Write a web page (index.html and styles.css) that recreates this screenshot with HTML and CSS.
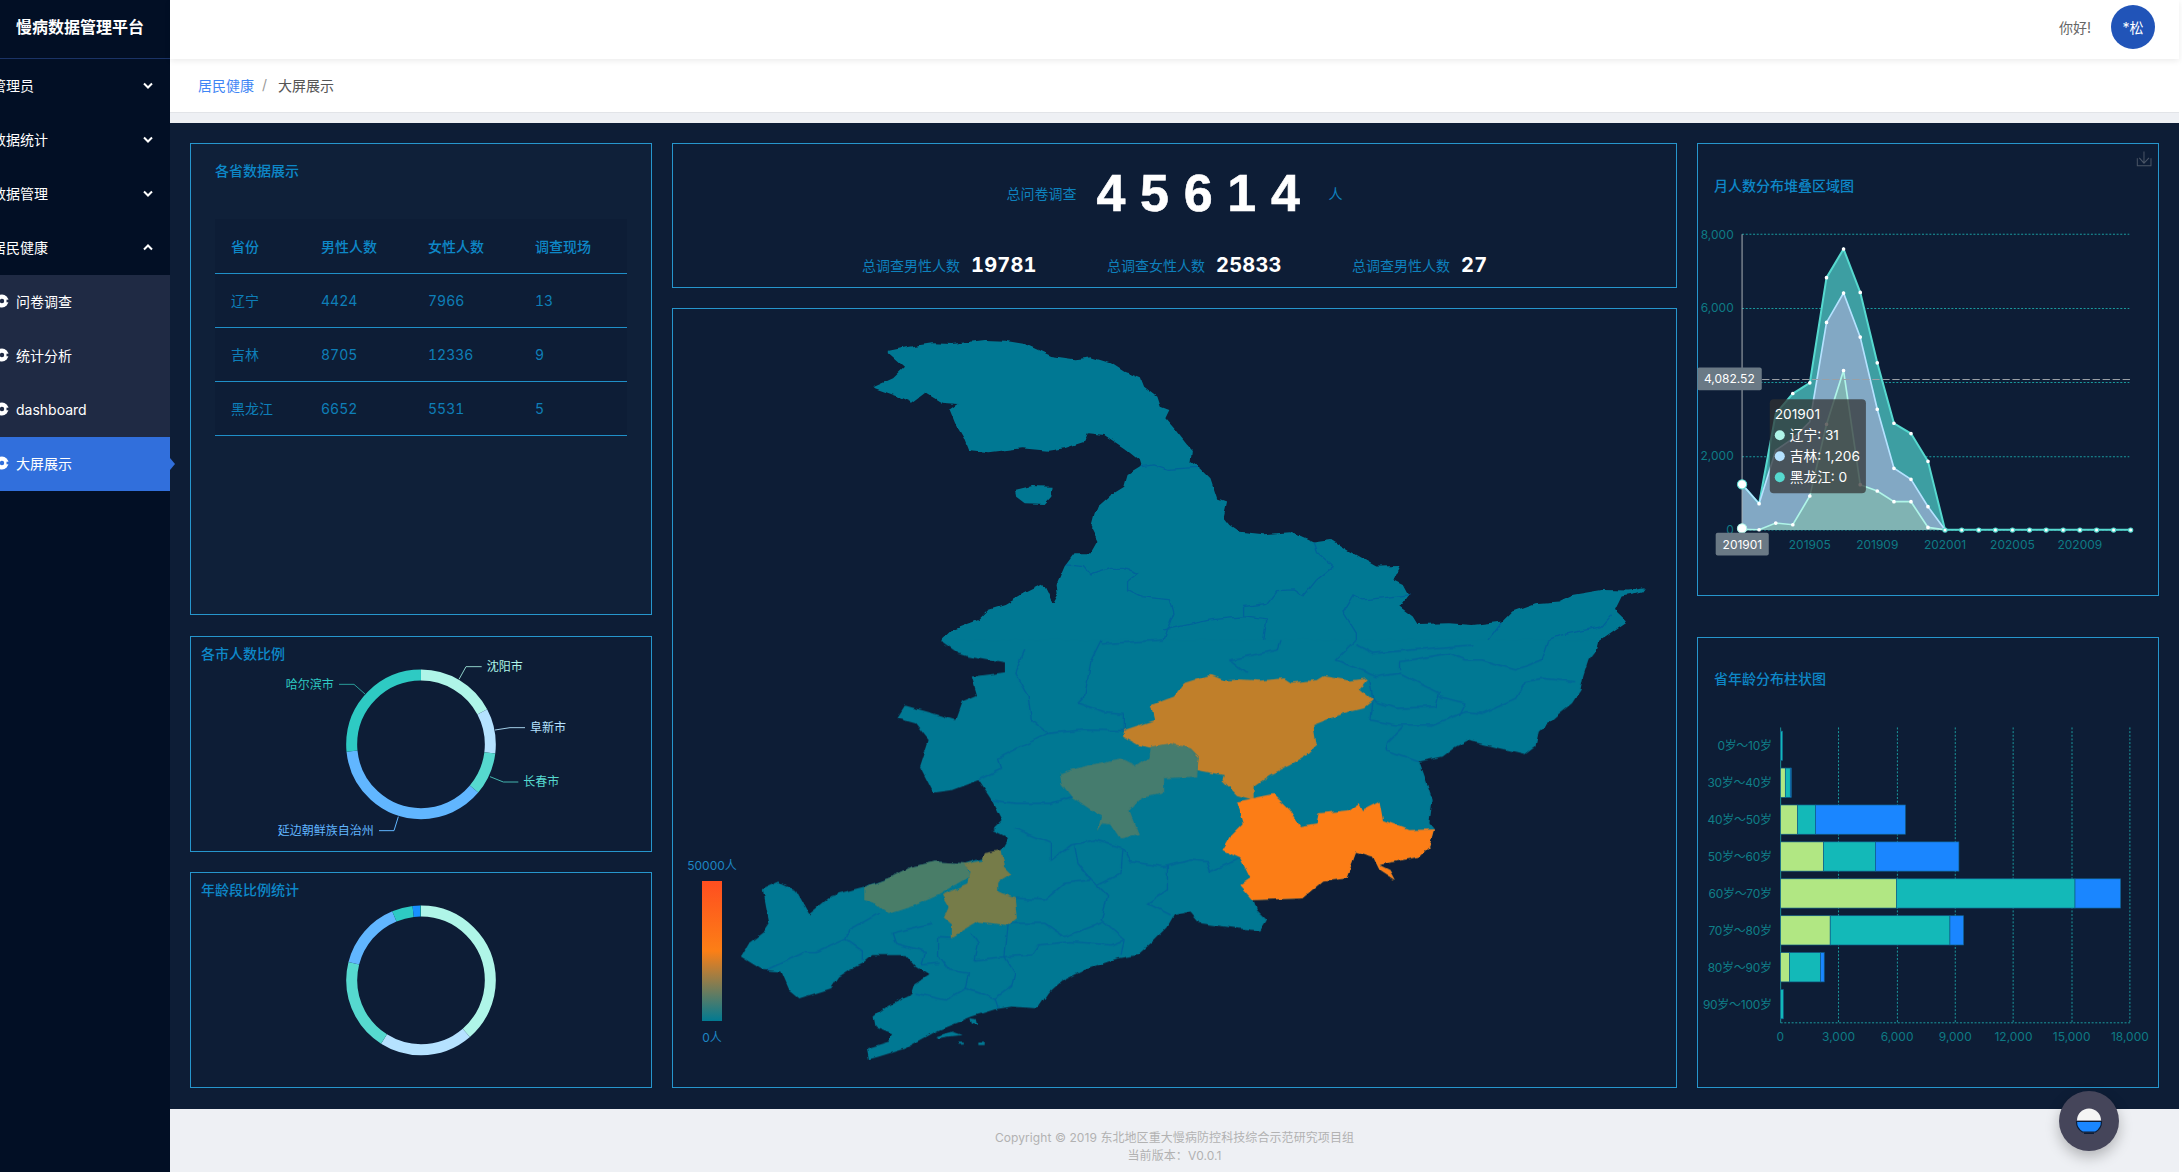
FILE: index.html
```html
<!DOCTYPE html>
<html lang="zh-CN">
<head>
<meta charset="utf-8">
<title>慢病数据管理平台</title>
<link rel="stylesheet" href="styles.css">
</head>
<body>
<svg class="defs" width="0" height="0">
  <defs>
    <mask id="gm" maskUnits="userSpaceOnUse" x="0" y="0" width="18" height="18">
      <rect width="18" height="18" fill="#fff"/>
      <circle cx="2" cy="9" r="2.2" fill="#000"/>
      <path d="M6.500 7.700h3v2.600h-3z" fill="#000"/>
    </mask>
    <filter id="rough" x="-2%" y="-2%" width="104%" height="104%">
      <feTurbulence type="fractalNoise" baseFrequency=".09" numOctaves="2" seed="7"/>
      <feDisplacementMap in="SourceGraphic" scale="5" xChannelSelector="R" yChannelSelector="G"/>
    </filter>
  </defs>
  <symbol id="gear" viewBox="0 0 18 18"><circle cx="2" cy="9" r="6.500" fill="#fff" mask="url(#gm)"/></symbol>
  <symbol id="down" viewBox="0 0 10 7"><path d="M1 1.500l4 4 4-4" fill="none" stroke="#fff" stroke-width="2"/></symbol>
  <symbol id="up" viewBox="0 0 10 7"><path d="M1 5.500l4-4 4 4" fill="none" stroke="#fff" stroke-width="2"/></symbol>
</svg>
<div class="app">
  <aside class="sidebar">
    <div class="logo">慢病数据管理平台</div>
    <nav class="menu">
      <div class="item"><span>管理员</span><svg class="chev"><use href="#down"/></svg></div>
      <div class="item"><span>数据统计</span><svg class="chev"><use href="#down"/></svg></div>
      <div class="item"><span>数据管理</span><svg class="chev"><use href="#down"/></svg></div>
      <div class="item"><span>居民健康</span><svg class="chev"><use href="#up"/></svg></div>
      <div class="sub"><svg class="gear"><use href="#gear"/></svg><span>问卷调查</span></div>
      <div class="sub"><svg class="gear"><use href="#gear"/></svg><span>统计分析</span></div>
      <div class="sub"><svg class="gear"><use href="#gear"/></svg><span>dashboard</span></div>
      <div class="sub active"><svg class="gear"><use href="#gear"/></svg><span>大屏展示</span></div>
    </nav>
  </aside>
  <i class="active-arrow"></i>
  <div class="main">
    <header class="topbar">
      <span class="hello">你好!</span>
      <span class="avatar">*松</span>
    </header>
    <div class="crumbs"><a class="crumb-link">居民健康</a><span class="crumb-sep">/</span><span class="crumb-now">大屏展示</span></div>
    <div class="strip"></div>
    <section class="screen">
      <div class="col col-left">
        <div class="panel panel-table">
          <h3 class="title title-table">各省数据展示</h3>
          <table class="tbl">
            <thead><tr><th class="c1">省份</th><th class="c2">男性人数</th><th class="c3">女性人数</th><th class="c4">调查现场</th></tr></thead>
            <tbody>
              <tr><td>辽宁</td><td class="num">4424</td><td class="num">7966</td><td class="num">13</td></tr>
              <tr><td>吉林</td><td class="num">8705</td><td class="num">12336</td><td class="num">9</td></tr>
              <tr><td>黑龙江</td><td class="num">6652</td><td class="num">5531</td><td class="num">5</td></tr>
            </tbody>
          </table>
        </div>
        <div class="panel panel-donut">
          <h3 class="title title-donut">各市人数比例</h3>
          <svg class="chart" viewBox="60 48 1386 648">
            <g fill="none" stroke-width="33" transform="rotate(-90 753 373)">
              <circle cx="753" cy="373" r="208" pathLength="360" stroke="#aff5e8" stroke-dasharray="62 298"/>
              <circle cx="753" cy="373" r="208" pathLength="360" stroke="#b5e2ff" stroke-dasharray="35 325" stroke-dashoffset="-62"/>
              <circle cx="753" cy="373" r="208" pathLength="360" stroke="#56d9cf" stroke-dasharray="33 327" stroke-dashoffset="-97"/>
              <circle cx="753" cy="373" r="208" pathLength="360" stroke="#61b6ff" stroke-dasharray="134 226" stroke-dashoffset="-130"/>
              <circle cx="753" cy="373" r="208" pathLength="360" stroke="#2ecac3" stroke-dasharray="96 264" stroke-dashoffset="-264"/>
            </g>
            <g fill="none" stroke-width="3">
              <path d="M867 178L888 140H935" stroke="#8fd0c8"/>
              <path d="M975 330L1020 323H1065" stroke="#a3cfe8"/>
              <path d="M960 470L1000 486H1045" stroke="#45b5ae"/>
              <path d="M685 590L672 632H627" stroke="#61b6ff"/>
              <path d="M585 222L552 193H507" stroke="#2a9c98"/>
            </g>
            <g class="lbl">
              <text x="950" y="140" fill="#aff5e8">沈阳市</text>
              <text x="1080" y="323" fill="#b5e2ff">阜新市</text>
              <text x="1060" y="485" fill="#56d9cf">长春市</text>
              <text x="323" y="632" fill="#61b6ff">延边朝鲜族自治州</text>
              <text x="347" y="193" fill="#2ecac3">哈尔滨市</text>
            </g>
          </svg>
        </div>
        <div class="panel panel-donut">
          <h3 class="title title-donut">年龄段比例统计</h3>
          <svg class="chart" viewBox="60 756 1386 648">
            <g fill="none" stroke-width="33" transform="rotate(-90 753 1081)">
              <circle cx="753" cy="1081" r="208" pathLength="360" stroke="#aff5e8" stroke-dasharray="139 221"/>
              <circle cx="753" cy="1081" r="208" pathLength="360" stroke="#b5e2ff" stroke-dasharray="73 287" stroke-dashoffset="-139"/>
              <circle cx="753" cy="1081" r="208" pathLength="360" stroke="#56d9cf" stroke-dasharray="72 288" stroke-dashoffset="-212"/>
              <circle cx="753" cy="1081" r="208" pathLength="360" stroke="#61b6ff" stroke-dasharray="53 307" stroke-dashoffset="-284"/>
              <circle cx="753" cy="1081" r="208" pathLength="360" stroke="#2ecac3" stroke-dasharray="16 344" stroke-dashoffset="-337"/>
              <circle cx="753" cy="1081" r="208" pathLength="360" stroke="#1890ff" stroke-dasharray="6 354" stroke-dashoffset="-353"/>
              <circle cx="753" cy="1081" r="208" pathLength="360" stroke="#13b8b8" stroke-dasharray="1 359" stroke-dashoffset="-359"/>
            </g>
          </svg>
        </div>
      </div>

      <div class="col col-center">
        <div class="panel panel-total">
          <div class="total-row">
            <span class="label">总问卷调查</span>
            <span class="big">45614</span>
            <span class="label">人</span>
          </div>
          <div class="stat-row">
            <div class="stat"><span class="label">总调查男性人数</span><b class="val">19781</b></div>
            <div class="stat"><span class="label">总调查女性人数</span><b class="val">25833</b></div>
            <div class="stat"><span class="label">总调查男性人数</span><b class="val">27</b></div>
          </div>
        </div>
        <div class="panel panel-map">
          <svg class="chart" viewBox="672 308 1005 780">
            <defs>
              <linearGradient id="lg" x1="0" y1="0" x2="0" y2="1">
                <stop offset="0" stop-color="#ff4e20"/>
                <stop offset=".5" stop-color="#fc7f16"/>
                <stop offset="1" stop-color="#017a92"/>
              </linearGradient>
            </defs>
            <g filter="url(#rough)">
            <g transform="translate(660 120) scale(.6632 .3333)">
              <path class="land" d="M345 692L375 680 410 670 440 672 490 660 520 662 550 672 570 690 590 708 625 718 650 712 680 730 700 755 725 775 730 800 750 830 755 860 768 870 762 895 775 925 785 950 795 975 802 990 800 1025 815 1045 830 1075 835 1105 840 1135 855 1145 850 1190 860 1215 875 1235 910 1243 950 1237 985 1268 1012 1260 1040 1295 1080 1340 1115 1338 1105 1380 1120 1395 1128 1425 1115 1460 1135 1490 1142 1512 1190 1510 1225 1515 1270 1505 1285 1475 1320 1450 1355 1445 1375 1425 1420 1410 1460 1412 1485 1405 1480 1418 1450 1430 1440 1470 1458 1505 1415 1564 422 1564 440 1530 480 1500 495 1470 520 1455 550 1420 578 1392 585 1420 592 1455 600 1425 598 1395 610 1340 625 1300 650 1300 660 1265 650 1225 655 1185 660 1160 680 1125 700 1100 705 1065 725 1040 722 1020 700 985 670 945 645 940 640 965 610 985 585 992 545 985 495 997 465 990 458 955 445 910 437 870 450 852 425 848 400 818 380 848 360 830 320 802 350 775 368 740 345 700Z"/>
              <path class="land" d="M535 1110L560 1098 592 1100 590 1130 580 1152 550 1150 537 1130Z"/>
              <path class="border" d="M725 1040L745 1035 765 1048 810 1042M612 1335L640 1340 650 1365 680 1345 700 1345 720 1360 705 1385 705 1410 725 1430 770 1440 775 1480 765 1530 760 1560M760 1530L830 1500 880 1490 880 1460 915 1450 930 1412 955 1410 970 1430 990 1380 1015 1340 990 1295 985 1268M880 1490L915 1500 910 1560M1130 1425L1060 1440 1045 1425 1030 1475 1050 1540 1050 1560M1270 1505L1250 1560M1435 1485L1420 1520 1360 1545 1340 1560"/>
            </g>
            <g transform="translate(660 640) scale(.6632 .3333)">
              <path class="land" d="M1415 0L1410 35 1400 60 1392 110 1388 150 1375 190 1350 230 1325 275 1320 320 1305 342 1218 302 1200 320 1180 350 1145 365 1155 420 1165 480 1160 550 1167 568 1160 620 1145 650 1095 670 1085 675 1100 690 1108 720 1085 690 1075 650 1050 635 1035 715 1000 725 970 775 895 780 900 810 915 840 905 872 870 865 815 850 800 815 775 825 765 860 740 910 720 945 690 955 640 990 605 1025 585 1060 570 1105 530 1100 505 1108 470 1130 420 1170 370 1225 330 1250 315 1258 312 1225 345 1205 350 1180 325 1160 322 1130 345 1095 380 1060 385 1030 405 1005 385 980 370 945 320 945 305 970 285 990 270 1010 258 1045 210 1075 195 1050 183 995 155 990 122 950 132 915 155 880 165 850 160 800 155 745 178 725 205 750 225 822 260 765 308 740 350 710 380 680 415 665 460 670 485 655 515 630 525 595 500 570 515 540 500 480 480 420 440 450 412 458 392 380 405 300 385 250 358 235 370 197 412 220 445 240 455 185 478 165 470 110 520 97 520 70 465 50 450 40 422 0Z"/>
              <path class="land" d="M468 1135l8 2 2 18-8-4zM415 1190l25-15 15 10-20 5-15 5zM480 1205h8v10h-8zM450 1208h8v6h-8z"/>
              <path class="border" d="M665 0L650 60 640 170 630 190 670 215 700 220 700 270M550 30L535 100 555 170 560 240 585 280 510 355 515 385 480 420M585 280L640 270 700 272M500 480L535 490 590 490 620 470M535 565L590 610 590 660 620 615 655 600 700 625 710 665 760 680 800 660 825 665 830 695 875 655M625 615L630 670 650 720 660 740 675 770 665 840 700 900 695 945M660 735L695 700 698 625M535 775L580 780 610 730 650 720M765 680L765 750 735 790 770 825M525 850L580 850 610 890 665 850M525 850L520 950 535 1000 530 1040 505 1075 510 1105M520 950L560 945 570 915 620 905 680 915 700 900M440 892L420 890 420 950 435 990 465 1000 460 1045 505 1075M460 1045L430 1080 385 1060M470 880L480 910 475 960 520 950M410 850L350 880 355 910 400 935 395 975 420 970M330 820L285 870 280 895 305 930 305 960M280 895L235 935 220 935 160 990M1070 120L1075 180 1072 240 1110 255 1165 255 1215 215 1240 220 1290 175 1305 125 1330 115 1380 125M1120 260L1095 310 1095 330 1145 365M860 60L885 100M860 60L930 30 935 0M1050 0L1020 60 1080 110 1115 100 1175 160 1170 200 1110 205 1072 180M1115 90L1115 65 1190 40 1215 60 1240 60 1290 90 1330 60 1340 0M1175 170L1215 190 1205 230M1050 15L1075 40 1190 20 1225 15M665 12L760 0"/>
              <path fill="#c07f2b" d="M830 105L850 122 875 118 905 122 940 115 950 128 990 120 1000 108 1040 122 1068 115 1055 145 1075 180 1060 205 1030 220 985 255 990 315 975 345 950 375 920 405 895 440 895 480 870 465 848 420 850 405 810 390 812 350 800 325 770 320 745 325 720 315 698 290 700 270 745 240 740 195 775 170 790 130Z"/>
              <path fill="#447b6e" d="M770 310L800 325 812 350 810 410 760 415 760 460 725 475 708 515 722 585 695 595 680 550 668 548 660 570 665 530 620 470 605 430 603 400 640 378 695 355 718 378 738 350 740 320Z"/>
              <path fill="#fc7d18" d="M925 462L950 510 965 558 990 550 993 520 1040 510 1055 490 1060 510 1085 485 1090 540 1130 570 1167 568 1160 620 1145 650 1095 670 1085 675 1100 690 1108 720 1085 690 1075 650 1050 635 1035 715 1000 725 970 775 895 780 875 735 890 715 875 655 848 630 860 590 880 550 870 485Z"/>
              <path fill="#497d68" d="M308 742L350 710 380 680 415 665 460 670 468 710 420 765 380 800 345 822 325 790 308 780Z"/>
              <path fill="#767b4a" d="M515 630L520 680 530 700 510 725 510 755 535 775 538 835 525 855 480 845 440 892 440 850 428 830 435 800 425 765 465 730 468 695 458 672 485 662 488 640Z"/>
            </g>
            </g>
            <rect x="702" y="881" width="20" height="140" fill="url(#lg)"/>
            <text class="legend" x="712" y="865">50000人</text>
            <text class="legend" x="712" y="1037">0人</text>
          </svg>
        </div>
      </div>

      <div class="col col-right">
        <div class="panel panel-area">
          <h3 class="title title-chart">月人数分布堆叠区域图</h3>
          <svg class="chart" viewBox="22 40 1384 1356">
            <path d="M1341 85V108H1382V85M1361 65V100M1347 84L1361 100 1376 84" fill="none" stroke="#4a5566" stroke-width="3"/>
            <path class="grid" d="M157 313H1317M157 535H1317M157 757H1317M157 979H1317M157 1199H1317"/>
            <g class="axis-y">
              <text x="132" y="313">8,000</text><text x="132" y="532">6,000</text><text x="132" y="976">2,000</text><text x="132" y="1197">0</text>
            </g>
            <path fill="#3d9ea2" d="M157 1062L208 1120 258 850 309 790 360 758 410 443 461 357 511 487 562 698 612 879 663 910 714 993 765 1198V1199H157Z"/>
            <path fill="#82a8c4" d="M157 1062L208 1120 258 960 309 925 360 875 410 577 461 489 511 621 562 837 612 1014 663 1047 714 1129 765 1198V1199H157Z"/>
            <path fill="#80b3b3" d="M157 1197L208 1198 258 1178 309 1183 360 1097 410 882 461 721 511 1063 562 1082 612 1114 663 1114 714 1191 765 1198V1199H157Z"/>
            <g fill="none" stroke-width="5">
              <path stroke="#56d9cf" d="M157 1062L208 1120 258 850 309 790 360 758 410 443 461 357 511 487 562 698 612 879 663 910 714 993 765 1198H1321" stroke-width="6"/>
              <path stroke="#b5e2ff" d="M157 1062L208 1120 258 960 309 925 360 875 410 577 461 489 511 621 562 837 612 1014 663 1047 714 1129 765 1198"/>
              <path stroke="#aff5e8" d="M157 1197L208 1198 258 1178 309 1183 360 1097 410 882 461 721 511 1063 562 1082 612 1114 663 1114 714 1191 765 1198"/>
            </g>
            <path class="dots" d="M208 1120h0M309 790h0M360 758h0M410 443h0M461 357h0M511 487h0M562 698h0M612 879h0M663 910h0M714 993h0M410 577h0M461 489h0M511 621h0M562 837h0M612 1014h0M663 1047h0M714 1129h0M208 1198h0M258 1178h0M309 1183h0M360 1097h0M410 882h0M461 721h0M511 1063h0M562 1082h0M612 1114h0M663 1114h0M714 1191h0"/>
            <path class="tail-out" d="M765 1199h0M815 1199h0M866 1199h0M916 1199h0M967 1199h0M1018 1199h0M1068 1199h0M1119 1199h0M1169 1199h0M1219 1199h0M1270 1199h0M1321 1199h0"/>
            <path class="tail-in" d="M765 1199h0M815 1199h0M866 1199h0M916 1199h0M967 1199h0M1018 1199h0M1068 1199h0M1119 1199h0M1169 1199h0M1219 1199h0M1270 1199h0M1321 1199h0"/>
            <path d="M157 313V1199" stroke="#aab0b5" stroke-width="3"/>
            <path d="M157 748H1322" stroke="#9aa0a6" stroke-width="3" stroke-dasharray="22 8"/>
            <circle cx="157" cy="1062" r="14" fill="#fff" stroke="#56d9cf" stroke-width="3"/>
            <circle cx="157" cy="1194" r="14" fill="#fff" stroke="#aff5e8" stroke-width="3"/>
            <rect x="23" y="712" width="193" height="68" rx="6" fill="#6a7985"/>
            <text class="tag" x="119" y="746">4,082.52</text>
            <rect x="78" y="1207" width="159" height="68" rx="6" fill="#6a7985"/>
            <text class="tag" x="158" y="1241">201901</text>
            <g class="axis-x">
              <text x="360" y="1241">201905</text><text x="562" y="1241">201909</text><text x="765" y="1241">202001</text><text x="967" y="1241">202005</text><text x="1169" y="1241">202009</text>
            </g>
            <rect x="240" y="807" width="288" height="282" rx="12" fill="#323232" fill-opacity=".72"/>
            <g class="tip">
              <text x="255" y="852">201901</text>
              <circle cx="270" cy="915" r="15" fill="#aff5e8"/><text x="300" y="915">辽宁: 31</text>
              <circle cx="270" cy="978" r="15" fill="#b5e2ff"/><text x="300" y="978">吉林: 1,206</text>
              <circle cx="270" cy="1041" r="15" fill="#56d9cf"/><text x="300" y="1041">黑龙江: 0</text>
            </g>
          </svg>
        </div>
        <div class="panel panel-bar">
          <h3 class="title title-chart title-bar">省年龄分布柱状图</h3>
          <svg class="chart" viewBox="22 20 1384 1356">
            <path class="grid" d="M445 292V1180M622 292V1180M796 292V1180M970 292V1180M1147 292V1180M1321 292V1180M271 1180H1321"/>
            <path d="M271 292V1180" stroke="#1a8f96" stroke-width="3"/>
            <g class="axis-left">
              <text x="244" y="347">0岁～10岁</text><text x="244" y="458">30岁～40岁</text><text x="244" y="569">40岁～50岁</text><text x="244" y="680">50岁～60岁</text><text x="244" y="791">60岁～70岁</text><text x="244" y="902">70岁～80岁</text><text x="244" y="1013">80岁～90岁</text><text x="244" y="1124">90岁～100岁</text>
            </g>
            <g class="bars">
              <rect class="b2" x="271" y="303" width="6" height="88"/>
              <rect class="b1" x="271" y="414" width="14" height="88"/><rect class="b2" x="285" y="414" width="15" height="88"/><rect class="b3" x="300" y="414" width="3" height="88"/>
              <rect class="b1" x="271" y="525" width="51" height="88"/><rect class="b2" x="322" y="525" width="54" height="88"/><rect class="b3" x="376" y="525" width="270" height="88"/>
              <rect class="b1" x="271" y="636" width="129" height="88"/><rect class="b2" x="400" y="636" width="156" height="88"/><rect class="b3" x="556" y="636" width="251" height="88"/>
              <rect class="b1" x="271" y="747" width="348" height="88"/><rect class="b2" x="619" y="747" width="537" height="88"/><rect class="b3" x="1156" y="747" width="137" height="88"/>
              <rect class="b1" x="271" y="858" width="149" height="88"/><rect class="b2" x="420" y="858" width="360" height="88"/><rect class="b3" x="780" y="858" width="41" height="88"/>
              <rect class="b1" x="271" y="969" width="27" height="88"/><rect class="b2" x="298" y="969" width="93" height="88"/><rect class="b3" x="391" y="969" width="11" height="88"/>
              <rect class="b2" x="271" y="1080" width="8" height="88"/>
            </g>
            <g class="axis-x">
              <text x="270" y="1220">0</text><text x="445" y="1220">3,000</text><text x="621" y="1220">6,000</text><text x="796" y="1220">9,000</text><text x="971" y="1220">12,000</text><text x="1146" y="1220">15,000</text><text x="1321" y="1220">18,000</text>
            </g>
          </svg>
        </div>
      </div>
    </section>
    <footer class="footer">
      <div>Copyright © 2019 东北地区重大慢病防控科技综合示范研究项目组</div>
      <div>当前版本：V0.0.1</div>
    </footer>
  </div>
  <div class="float-btn">
    <svg width="28" height="28" viewBox="0 0 28 28">
      <path d="M2 13.500a12 12 0 0 1 24 0z" fill="#f5f5f5"/>
      <path d="M1.500 14.500h25a12.500 12 0 0 1-6 10.500h-13a12.500 12 0 0 1-6-10.500z" fill="#1a86ff" stroke="#0c1d36" stroke-width="1.200"/>
      <path d="M9 25.500h10v1.500h-10z" fill="#0c1d36"/>
    </svg>
  </div>
</div>
</body>
</html>
```
FILE: styles.css
```css
* { box-sizing: border-box; }
html, body { margin: 0; height: 100%; overflow: hidden; background: #fff; }
body { font-family: "Inter", "Noto Sans CJK SC", sans-serif; font-size: 14px; }
.defs { position: absolute; }
.app { display: flex; height: 1172px; width: 2182px; position: relative; overflow: hidden; }

.sidebar { width: 170px; flex: none; background: #020f25; color: #fff; overflow: hidden; }
.logo { height: 59px; border-bottom: 1px solid #1b3366; padding: 0 0 6px 16px; display: flex; align-items: center; font-size: 16px; font-weight: 700; white-space: nowrap; }
.item { height: 54px; display: flex; align-items: center; justify-content: space-between; padding: 0 17px 2px 0; background: #020f25; }
.item span { margin-left: -8px; }
.chev { width: 10px; height: 7px; }
.sub { height: 54px; display: flex; align-items: center; gap: 7px; padding-bottom: 2px; background: #1f2a44; }
.sub.active { background: #316fdc; }
.gear { width: 18px; height: 18px; margin-right: -9px; flex: none; }
.active-arrow { position: absolute; left: 170px; top: 458px; width: 0; height: 0; border-left: 5px solid #316fdc; border-top: 6px solid transparent; border-bottom: 6px solid transparent; z-index: 2; }

.main { flex: none; width: 2009px; display: flex; flex-direction: column; height: 1172px; }
.topbar { height: 59px; background: #fff; display: flex; align-items: center; justify-content: flex-end; gap: 20px; padding: 0 24px 5px 0; box-shadow: 0 2px 6px rgba(0, 0, 0, .08); position: relative; }
.hello { color: #666; font-size: 14px; }
.avatar { width: 44px; height: 44px; border-radius: 50%; background: #2154b8; color: #fff; display: flex; align-items: center; justify-content: center; font-size: 14px; }
.crumbs { height: 54px; background: #fff; border-bottom: 1px solid #e2e4e8; padding: 0 0 2px 28px; display: flex; align-items: center; }
.crumb-link { color: #3f86f5; }
.crumb-sep { color: #999; margin: 0 11px 0 8px; }
.crumb-now { color: #555; }
.strip { height: 10px; background: #eef0f4; }

.screen { height: 986px; background: #0d1d36; padding: 20px 20px 21px 20px; display: flex; gap: 20px; }
.col { display: flex; flex-direction: column; }
.col-left { width: 462px; gap: 20px; }
.col-center { width: 1005px; gap: 20px; }
.col-right { width: 462px; gap: 41px; }
.panel { border: 1px solid #2696cd; position: relative; }
.panel-table { height: 472px; margin-bottom: 1px; background: #0f2039; padding: 0 24px 0 24px; }
.panel-donut { height: 216px; }
.panel-total { height: 145px; }
.panel-map { flex: 1; }
.panel-area { height: 453px; }
.panel-bar { flex: 1; }

.chart { position: absolute; left: -1px; top: -1px; width: calc(100% + 2px); height: calc(100% + 2px); }
.title { margin: 0; color: #0d88c8; font-size: 14px; font-weight: 500; line-height: 20px; }
.title-table { padding-top: 17px; }
.title-donut { padding: 7px 0 0 10px; }
.title-chart { padding: 32px 0 0 16px; }
.title-bar { padding-top: 31px; }

.tbl { border-collapse: collapse; width: 412px; margin-top: 38px; table-layout: fixed; background: #0d1d36; color: #0d7fb8; }
.tbl th, .tbl td { text-align: left; padding: 0 0 0 16px; height: 54px; border-bottom: 1px solid #1f8fc8; font-weight: 400; }
.tbl th { font-weight: 500; color: #0d88c8; }
.tbl .num { font-variant-numeric: tabular-nums; }
.c1 { width: 90px; } .c2 { width: 107px; } .c3 { width: 107px; }

.label { color: #0d81bd; font-size: 14px; }
.total-row { display: flex; align-items: center; justify-content: center; height: 100px; padding-bottom: 2px; }
.big { font-family: "Liberation Sans", sans-serif; font-weight: 700; font-size: 52px; letter-spacing: 14.700px; color: #fff; margin: 0 14px 0 20px; line-height: 60px; -webkit-text-stroke: .6px #fff; }
.stat-row { display: flex; padding-left: 189px; padding-top: 1px; }
.stat { width: 245px; display: flex; align-items: center; gap: 11px; height: 40px; }
.val { color: #fff; font-size: 20px; font-weight: 700; font-variant-numeric: tabular-nums; letter-spacing: .2px; }

.land { fill: #027893; }
.border { fill: none; stroke: #06639a; stroke-width: 1.300; vector-effect: non-scaling-stroke; }
.legend { fill: #1d86c4; font-size: 12px; text-anchor: middle; dominant-baseline: central; }

.lbl text { font-size: 36px; dominant-baseline: central; }
.grid { fill: none; stroke: #1a9a9e; stroke-width: 3; stroke-dasharray: 6 5; }
.axis-y text { fill: #0d7b85; font-size: 36px; text-anchor: end; dominant-baseline: central; }
.axis-x text { fill: #0d7b85; font-size: 36px; text-anchor: middle; dominant-baseline: central; }
.axis-left text { fill: #0f7f88; font-size: 36px; text-anchor: end; dominant-baseline: central; letter-spacing: -.8px; }
.dots { fill: none; stroke: #fff; stroke-width: 11; stroke-linecap: round; }
.tail-out { fill: none; stroke: #56d9cf; stroke-width: 16; stroke-linecap: round; }
.tail-in { fill: none; stroke: #fff; stroke-width: 9; stroke-linecap: round; }
.tag { fill: #fff; font-size: 36px; text-anchor: middle; dominant-baseline: central; }
.tip text { fill: #fff; font-size: 41px; dominant-baseline: central; }
.b1 { fill: #b1e783; } .b2 { fill: #13b9b8; } .b3 { fill: #1a86ff; }
.bars rect { stroke: #0f5f8a; stroke-width: 2; }

.footer { flex: 1; background: #eef0f4; color: #b2b2b2; font-size: 12px; line-height: 18px; text-align: center; padding-top: 20px; letter-spacing: .08px; }
.float-btn { position: absolute; left: 2059px; top: 1091px; width: 60px; height: 60px; border-radius: 50%; background: #45455a; box-shadow: 0 6px 14px rgba(0, 0, 0, .25); display: flex; align-items: center; justify-content: center; }
```
